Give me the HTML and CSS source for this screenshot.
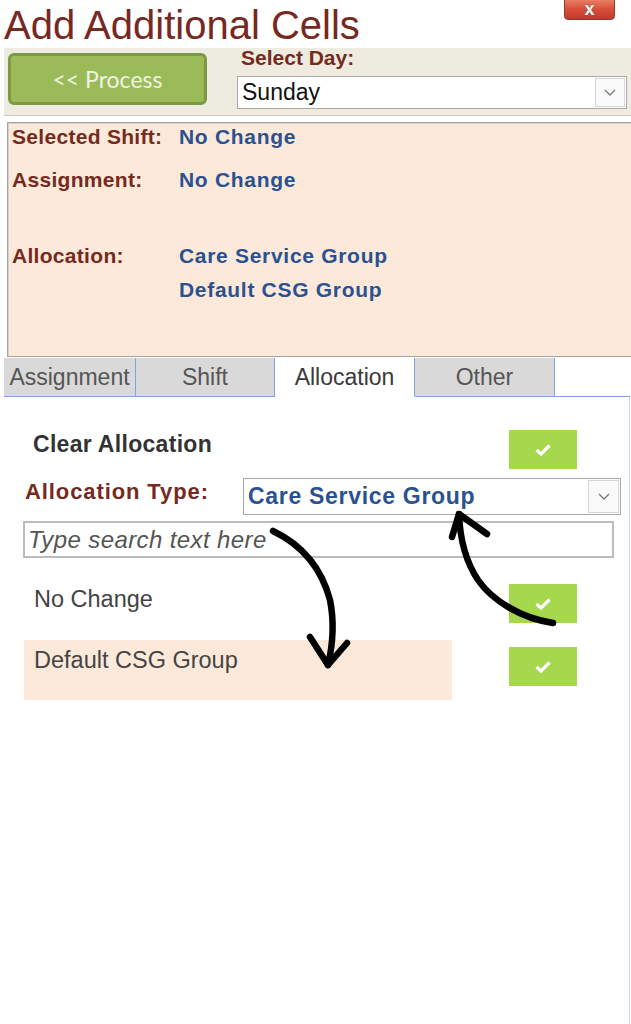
FILE: index.html
```html
<!DOCTYPE html>
<html lang="en">
  <head>
    <meta charset="utf-8" />
    <title>Add Additional Cells</title>
    <link rel="stylesheet" href="styles.css">
  </head>
  <body>
    <div class="header">
      <h1 class="title">Add Additional Cells</h1>
      <button class="close-btn">x</button>
    </div>

    <div class="toolbar">
      <button class="process-btn">&lt;&lt; Process</button>
      <div class="day-picker">
        <div class="field-label">Select Day:</div>
        <div class="select day-select">
          <span class="select-text">Sunday</span>
          <span class="select-arrow">
            <svg width="12" height="7" viewBox="0 0 12 7"><path d="M1 1 L6 6 L11 1" fill="none" stroke="#777" stroke-width="1.3"/></svg>
          </span>
        </div>
      </div>
    </div>

    <div class="summary">
      <div class="sum-row">
        <div class="sum-label">Selected Shift:</div>
        <div class="sum-values"><div>No Change</div></div>
      </div>
      <div class="sum-row">
        <div class="sum-label">Assignment:</div>
        <div class="sum-values"><div>No Change</div></div>
      </div>
      <div class="sum-row sum-row-spaced">
        <div class="sum-label">Allocation:</div>
        <div class="sum-values">
          <div>Care Service Group</div>
          <div>Default CSG Group</div>
        </div>
      </div>
    </div>

    <div class="tabs">
      <div class="tab">Assignment</div>
      <div class="tab">Shift</div>
      <div class="tab active">Allocation</div>
      <div class="tab">Other</div>
      <div class="tab-fill"></div>
    </div>

    <div class="tab-body">
      <div class="opt-row clear-row">
        <div class="opt-heading">Clear Allocation</div>
        <button class="check-btn"><svg width="18" height="14" viewBox="0 0 18 14"><path d="M2.5 7 L7 11 L15.5 2.5" fill="none" stroke="#fff" stroke-width="3.2"/></svg></button>
      </div>

      <div class="type-row">
        <div class="type-label">Allocation Type:</div>
        <div class="select type-select">
          <span class="select-text">Care Service Group</span>
          <span class="select-arrow">
            <svg width="12" height="7" viewBox="0 0 12 7"><path d="M1 1 L6 6 L11 1" fill="none" stroke="#777" stroke-width="1.3"/></svg>
          </span>
        </div>
      </div>

      <div class="search-box">Type search text here</div>

      <div class="opt-row item-row">
        <div class="item-text">No Change</div>
        <button class="check-btn"><svg width="18" height="14" viewBox="0 0 18 14"><path d="M2.5 7 L7 11 L15.5 2.5" fill="none" stroke="#fff" stroke-width="3.2"/></svg></button>
      </div>

      <div class="opt-row item-row selected-row">
        <div class="item-text item-selected">Default CSG Group</div>
        <button class="check-btn"><svg width="18" height="14" viewBox="0 0 18 14"><path d="M2.5 7 L7 11 L15.5 2.5" fill="none" stroke="#fff" stroke-width="3.2"/></svg></button>
      </div>
    </div>

    <!-- hand drawn annotation arrows -->
    <svg class="annotations" width="631" height="1024" viewBox="0 0 631 1024">
      <g fill="none" stroke="#000" stroke-linecap="round" stroke-linejoin="round">
        <path d="M273 531 C 300 544, 321 566, 330 600 C 335 625, 332 648, 328 665" stroke-width="6.5"/>
        <path d="M310 637 L 328 665 L 347 643" stroke-width="6.5"/>
        <path d="M553 623 C 520 618, 492 600, 478 580 C 466 562, 460 540, 459 514" stroke-width="6.5"/>
        <path d="M452 537 L 459 514 L 487 534" stroke-width="6.5"/>
      </g>
    </svg>
  </body>
</html>
```

FILE: styles.css
```css
html {
  --maroon: #752a1e;
  --blue: #2a5190;
  --peach: #fde9da;
  --tab-line: #7fa6dc;
  --check: #a5d84c;
}
body {
  margin: 0;
  width: 631px;
  height: 1024px;
  position: relative;
  overflow: hidden;
  background: #fff;
  font-family: "Liberation Sans", Arial, sans-serif;
}

/* header */
.header {
  display: flex;
  align-items: flex-start;
  height: 48px;
}
.title {
  margin: 0 0 0 4px;
  padding-top: 2px;
  font-size: 40px;
  line-height: 46px;
  font-weight: normal;
  color: #77281f;
}
.close-btn {
  margin-left: auto;
  margin-right: 16px;
  margin-top: -4px;
  width: 51px;
  height: 24px;
  padding: 2px 0 0;
  border: 1px solid #8e3b30;
  border-radius: 4px;
  background: linear-gradient(#ee8b75, #d9503a 55%, #c0392b);
  color: #f4eeee;
  font: bold 18px/16px "Liberation Sans", Arial, sans-serif;
  text-shadow: 0 0 2px #666;
}

/* toolbar band */
.toolbar {
  display: flex;
  margin-left: 4px;
  height: 67px;
  background: #eeece1;
  border-bottom: 1px solid #c9c7bf;
}
.process-btn {
  margin: 5px 0 0 4px;
  width: 199px;
  height: 52px;
  border: 3px solid #7c9a41;
  border-radius: 6px;
  background: #9bbb59;
  color: #eef4e2;
  font: 23px "Lato", sans-serif;
}
.day-picker {
  margin-left: 30px;
}
.field-label {
  font-weight: bold;
  font-size: 21px;
  line-height: 20px;
  color: var(--maroon);
  padding-left: 4px;
}
.select {
  display: flex;
  align-items: center;
  background: #fff;
  border: 1px solid #a9a9a9;
  box-sizing: border-box;
}
.select-text {
  flex: 1;
  padding-left: 4px;
}
.select-arrow {
  display: flex;
  align-items: center;
  justify-content: center;
  width: 28px;
  align-self: stretch;
  margin: 1px;
  border: 1px solid #d6d6d6;
  background: #fafafa;
}
.day-select {
  margin-top: 8px;
  width: 390px;
  height: 33px;
  font-size: 23px;
  color: #111;
}

/* summary panel */
.summary {
  margin: 6px 0 0 7px;
  height: 235px;
  box-sizing: border-box;
  padding: 2px 0 0 4px;
  background: var(--peach);
  border: 1px solid #a3a3a3;
  border-right: none;
  box-shadow: inset 1px 1px 0 #d8d0c8;
}
.sum-row {
  display: flex;
  font-size: 21px;
  line-height: 24px;
  font-weight: bold;
}
.sum-row + .sum-row {
  margin-top: 19px;
}
.sum-row + .sum-row-spaced {
  margin-top: 52px;
}
.sum-label {
  width: 167px;
  color: var(--maroon);
  letter-spacing: 0.3px;
}
.sum-values {
  display: flex;
  flex-direction: column;
  gap: 10px;
  color: var(--blue);
  letter-spacing: 0.7px;
}

/* tabs */
.tabs {
  display: flex;
  margin-top: 1px;
  padding-left: 4px;
  width: 630px;
  box-sizing: border-box;
}
.tab {
  height: 38px;
  text-align: center;
  font-size: 23px;
  line-height: 38px;
  color: #555;
  background: #d9d9d9;
  border-right: 1px solid var(--tab-line);
  border-bottom: 1px solid var(--tab-line);
  white-space: nowrap;
}
.tab:nth-child(1) { width: 131px; }
.tab:nth-child(2) { width: 138px; }
.tab:nth-child(3) { width: 139px; }
.tab:nth-child(4) { width: 139px; }
.tab.active {
  background: #fff;
  color: #3a3a3a;
  border-bottom-color: #fff;
}
.tab-fill {
  flex: 1;
  border-bottom: 1px solid var(--tab-line);
}

/* allocation tab body */
.tab-body {
  width: 630px;
  height: 627px;
  box-sizing: border-box;
  border-right: 1px solid #c6d8ef;
  padding-top: 33px;
}
.opt-row {
  display: flex;
  align-items: flex-start;
  justify-content: space-between;
  padding-right: 52px;
}
.check-btn {
  width: 68px;
  height: 39px;
  padding: 0;
  border: none;
  background: var(--check);
  display: flex;
  align-items: center;
  justify-content: center;
}
.opt-heading {
  margin: 2px 0 0 33px;
  font-size: 23px;
  line-height: 24px;
  font-weight: bold;
  color: #333;
  letter-spacing: 0.3px;
}
.type-row {
  display: flex;
  margin-top: 9px;
  padding-left: 25px;
}
.type-label {
  width: 218px;
  margin-top: 2px;
  font-size: 22px;
  line-height: 24px;
  font-weight: bold;
  color: var(--maroon);
  letter-spacing: 0.9px;
}
.type-select {
  width: 378px;
  height: 37px;
  font-size: 23px;
  font-weight: bold;
  color: var(--blue);
  letter-spacing: 0.7px;
}
.type-select .select-arrow {
  width: 29px;
}
.search-box {
  margin: 6px 0 0 23px;
  width: 591px;
  height: 37px;
  box-sizing: border-box;
  border: 2px solid #bcbcbc;
  padding-left: 3px;
  font-size: 24px;
  line-height: 33px;
  font-style: italic;
  color: #555;
  letter-spacing: 0.4px;
}
.item-row {
  margin-top: 26px;
}
.item-text {
  margin: 3px 0 0 34px;
  font-size: 23.5px;
  line-height: 24px;
  color: #444;
}
.selected-row {
  margin-top: 17px;
  padding-left: 24px;
}
.selected-row .check-btn {
  margin-top: 7px;
}
.item-selected {
  margin: 0;
  width: 428px;
  height: 60px;
  box-sizing: border-box;
  padding: 8px 0 0 10px;
  background: var(--peach);
}

.annotations {
  position: absolute;
  left: 0;
  top: 0;
  pointer-events: none;
}
```
